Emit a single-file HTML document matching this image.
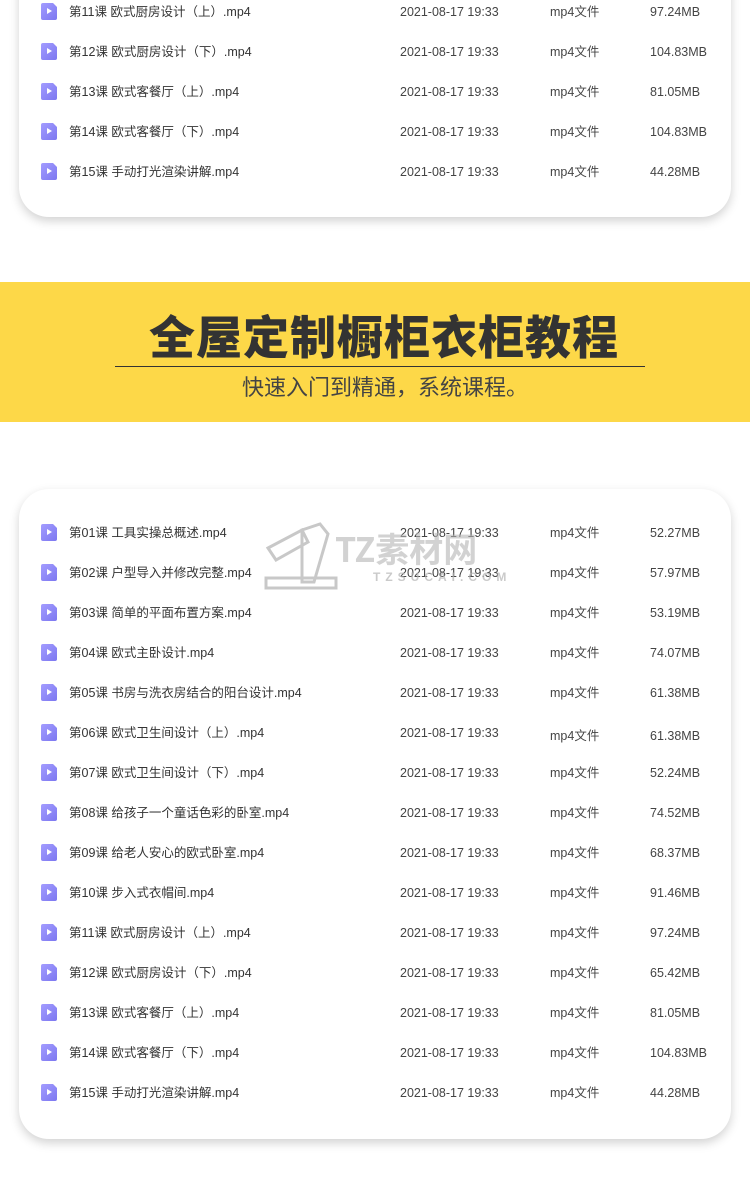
<!DOCTYPE html>
<html><head><meta charset="utf-8"><style>
*{margin:0;padding:0;box-sizing:border-box}
body{width:750px;height:1191px;background:#fff;position:relative;overflow:hidden;font-family:"Liberation Sans","Noto Sans CJK SC",sans-serif;color:#333}
.card{position:absolute;left:19px;width:712px;background:#fff;border-radius:30px;box-shadow:0 4px 10px rgba(0,0,0,.18)}
.row{position:absolute;left:0;height:20px;font-size:12.5px;line-height:22px;color:#333}
.ic{position:absolute;left:22px;top:2px;width:16px;height:17px;background:linear-gradient(135deg,#a39cff,#7c77f0);border-radius:2px}
.ic:before{content:"";position:absolute;right:0;top:0;border-left:4px solid transparent;border-top:4px solid #fff}
.ic:after{content:"";position:absolute;left:6px;top:5px;border-left:5px solid #fff;border-top:3.5px solid transparent;border-bottom:3.5px solid transparent}
.n{position:absolute;left:50px;white-space:nowrap}
.d{position:absolute;left:381px;white-space:nowrap;color:#444}
.t{position:absolute;left:531px;white-space:nowrap;color:#444}
.s{position:absolute;left:631px;white-space:nowrap;color:#444}
.band{position:absolute;left:0;top:282px;width:750px;height:140px;background:#fdd848}
.title{position:absolute;left:9px;width:750px;top:302px;text-align:center;font-size:46px;font-weight:900;color:#333;letter-spacing:1px;font-family:"Noto Sans CJK SC",sans-serif}
.line{position:absolute;left:115px;top:366px;width:530px;height:1px;background:#333}
.sub{position:absolute;left:10px;width:750px;top:370px;text-align:center;font-size:22px;color:#444;letter-spacing:0px;font-family:"Noto Sans CJK SC",sans-serif}
</style></head><body>
<div class="card" style="top:-40px;height:257px">
<div class="row" style="top:41px"><i class="ic"></i><span class="n">第11课 欧式厨房设计（上）.mp4</span><span class="d">2021-08-17 19:33</span><span class="t">mp4文件</span><span class="s">97.24MB</span></div>
<div class="row" style="top:81px"><i class="ic"></i><span class="n">第12课 欧式厨房设计（下）.mp4</span><span class="d">2021-08-17 19:33</span><span class="t">mp4文件</span><span class="s">104.83MB</span></div>
<div class="row" style="top:121px"><i class="ic"></i><span class="n">第13课 欧式客餐厅（上）.mp4</span><span class="d">2021-08-17 19:33</span><span class="t">mp4文件</span><span class="s">81.05MB</span></div>
<div class="row" style="top:161px"><i class="ic"></i><span class="n">第14课 欧式客餐厅（下）.mp4</span><span class="d">2021-08-17 19:33</span><span class="t">mp4文件</span><span class="s">104.83MB</span></div>
<div class="row" style="top:201px"><i class="ic"></i><span class="n">第15课 手动打光渲染讲解.mp4</span><span class="d">2021-08-17 19:33</span><span class="t">mp4文件</span><span class="s">44.28MB</span></div>
</div>
<div class="band"></div>
<div class="title">全屋定制橱柜衣柜教程</div>
<div class="line"></div>
<div class="sub">快速入门到精通，系统课程。</div>
<div class="card" style="top:489px;height:650px">
<div class="row" style="top:33px"><i class="ic"></i><span class="n">第01课 工具实操总概述.mp4</span><span class="d">2021-08-17 19:33</span><span class="t">mp4文件</span><span class="s">52.27MB</span></div>
<div class="row" style="top:73px"><i class="ic"></i><span class="n">第02课 户型导入并修改完整.mp4</span><span class="d">2021-08-17 19:33</span><span class="t">mp4文件</span><span class="s">57.97MB</span></div>
<div class="row" style="top:113px"><i class="ic"></i><span class="n">第03课 简单的平面布置方案.mp4</span><span class="d">2021-08-17 19:33</span><span class="t">mp4文件</span><span class="s">53.19MB</span></div>
<div class="row" style="top:153px"><i class="ic"></i><span class="n">第04课 欧式主卧设计.mp4</span><span class="d">2021-08-17 19:33</span><span class="t">mp4文件</span><span class="s">74.07MB</span></div>
<div class="row" style="top:193px"><i class="ic"></i><span class="n">第05课 书房与洗衣房结合的阳台设计.mp4</span><span class="d">2021-08-17 19:33</span><span class="t">mp4文件</span><span class="s">61.38MB</span></div>
<div class="row" style="top:233px"><i class="ic"></i><span class="n">第06课 欧式卫生间设计（上）.mp4</span><span class="d">2021-08-17 19:33</span><span class="t" style="top:3px">mp4文件</span><span class="s" style="top:3px">61.38MB</span></div>
<div class="row" style="top:273px"><i class="ic"></i><span class="n">第07课 欧式卫生间设计（下）.mp4</span><span class="d">2021-08-17 19:33</span><span class="t">mp4文件</span><span class="s">52.24MB</span></div>
<div class="row" style="top:313px"><i class="ic"></i><span class="n">第08课 给孩子一个童话色彩的卧室.mp4</span><span class="d">2021-08-17 19:33</span><span class="t">mp4文件</span><span class="s">74.52MB</span></div>
<div class="row" style="top:353px"><i class="ic"></i><span class="n">第09课 给老人安心的欧式卧室.mp4</span><span class="d">2021-08-17 19:33</span><span class="t">mp4文件</span><span class="s">68.37MB</span></div>
<div class="row" style="top:393px"><i class="ic"></i><span class="n">第10课 步入式衣帽间.mp4</span><span class="d">2021-08-17 19:33</span><span class="t">mp4文件</span><span class="s">91.46MB</span></div>
<div class="row" style="top:433px"><i class="ic"></i><span class="n">第11课 欧式厨房设计（上）.mp4</span><span class="d">2021-08-17 19:33</span><span class="t">mp4文件</span><span class="s">97.24MB</span></div>
<div class="row" style="top:473px"><i class="ic"></i><span class="n">第12课 欧式厨房设计（下）.mp4</span><span class="d">2021-08-17 19:33</span><span class="t">mp4文件</span><span class="s">65.42MB</span></div>
<div class="row" style="top:513px"><i class="ic"></i><span class="n">第13课 欧式客餐厅（上）.mp4</span><span class="d">2021-08-17 19:33</span><span class="t">mp4文件</span><span class="s">81.05MB</span></div>
<div class="row" style="top:553px"><i class="ic"></i><span class="n">第14课 欧式客餐厅（下）.mp4</span><span class="d">2021-08-17 19:33</span><span class="t">mp4文件</span><span class="s">104.83MB</span></div>
<div class="row" style="top:593px"><i class="ic"></i><span class="n">第15课 手动打光渲染讲解.mp4</span><span class="d">2021-08-17 19:33</span><span class="t">mp4文件</span><span class="s">44.28MB</span></div>
</div>
<svg style="position:absolute;left:262px;top:520px" width="80" height="72" viewBox="0 0 80 72" fill="none" stroke="#c8c8c8" stroke-width="3">
<path d="M6 28 L40 10 L46 22 L14 40 Z"/><path d="M40 10 L58 4 L66 14 L52 62 L40 62 Z"/><path d="M4 58 L74 58 L74 68 L4 68 Z"/>
</svg>
<div style="position:absolute;left:335px;top:528px;font-size:34px;font-weight:700;color:rgba(180,180,180,.6);font-family:'Noto Sans CJK SC',sans-serif;line-height:40px">TZ素材网</div>
<div style="position:absolute;left:373px;top:570px;font-size:12px;letter-spacing:5px;color:rgba(180,180,180,.7);font-weight:700">TZSUCAI.COM</div>
</body></html>
